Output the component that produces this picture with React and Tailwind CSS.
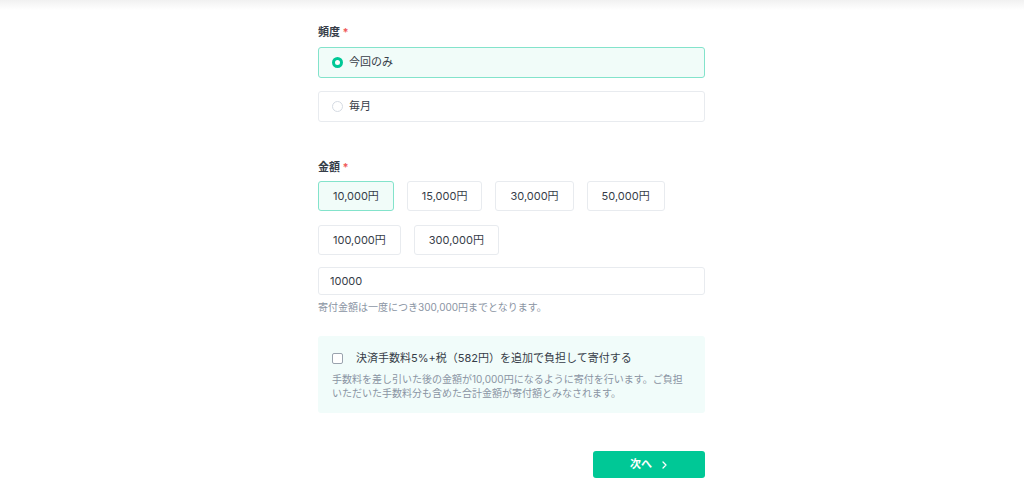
import React, { useState } from 'react';

const AMOUNTS = [10000, 15000, 30000, 50000, 100000, 300000];

export default function App() {
  const [freq, setFreq] = useState('once');
  const [amount, setAmount] = useState(10000);
  const [coverFee, setCoverFee] = useState(false);

  return (
    <div
      className="min-h-screen bg-white text-[#363d48]"
      style={{ fontFamily: 'Inter, "Noto Sans CJK JP", sans-serif' }}
    >
      {/* header shadow */}
      <div className="h-[10px] bg-gradient-to-b from-[#f1f1f1] to-white"></div>

      <div className="w-[387px] ml-[318px] pt-[13px]">
        {/* Frequency */}
        <div className="text-[11px] font-bold leading-[18px] text-[#363d48]">
          頻度 <span className="text-[#f05a5a]">*</span>
        </div>
        <div className="mt-[6px] flex flex-col gap-[13px]">
          {[
            { key: 'once', label: '今回のみ' },
            { key: 'monthly', label: '毎月' },
          ].map((opt) => {
            const active = freq === opt.key;
            return (
              <button
                key={opt.key}
                onClick={() => setFreq(opt.key)}
                className={`h-[31px] flex items-center px-[13px] rounded-[3px] border text-left ${
                  active ? 'border-[#83e3cb] bg-[#f1fcf9]' : 'border-[#e8ebef] bg-white'
                }`}
              >
                {active ? (
                  <span className="w-[11px] h-[11px] rounded-full border-[3px] border-[#00c896] bg-white"></span>
                ) : (
                  <span className="w-[11px] h-[11px] rounded-full border border-[#d5dbe3] bg-white"></span>
                )}
                <span className="ml-[6px] text-[11px] text-[#363d48]">{opt.label}</span>
              </button>
            );
          })}
        </div>

        {/* Amount */}
        <div className="mt-[36px] text-[11px] font-bold leading-[18px] text-[#363d48]">
          金額 <span className="text-[#f05a5a]">*</span>
        </div>
        <div className="mt-[5px] flex flex-wrap gap-x-[13px] gap-y-[14px] w-full">
          {AMOUNTS.map((a) => {
            const active = amount === a;
            return (
              <button
                key={a}
                onClick={() => setAmount(a)}
                className={`h-[30px] px-[14px] rounded-[3px] border text-[11px] text-[#363d48] ${
                  active ? 'border-[#83e3cb] bg-[#f1fcf9]' : 'border-[#e8ebef] bg-white'
                }`}
              >
                {a.toLocaleString('en-US')}円
              </button>
            );
          })}
        </div>
        <input
          value={amount}
          onChange={(e) => setAmount(Number(e.target.value) || 0)}
          className="mt-[12px] w-full h-[28px] px-[11px] rounded-[3px] border border-[#e8ebef] text-[11px] text-[#363d48] outline-none"
        />
        <p className="mt-[4px] text-[10px] leading-[16px] text-[#8a94a3]">
          寄付金額は一度につき300,000円までとなります。
        </p>

        {/* Fee box */}
        <div className="mt-[21px] h-[77px] rounded-[3px] bg-[#f1fcfa] px-[14px] pt-[14px]">
          <label className="flex items-center cursor-pointer">
            <input
              type="checkbox"
              checked={coverFee}
              onChange={(e) => setCoverFee(e.target.checked)}
              className="sr-only"
            />
            <span
              className={`w-[11px] h-[11px] rounded-[2px] border ${
                coverFee ? 'border-[#00c896] bg-[#00c896]' : 'border-[#9aa3ae] bg-white'
              }`}
            ></span>
            <span className="ml-[13px] text-[11px] leading-[16px] text-[#363d48]">
              決済手数料5%+税（582円）を追加で負担して寄付する
            </span>
          </label>
          <p className="mt-[6px] text-[10px] leading-[14px] text-[#8a94a3]">
            手数料を差し引いた後の金額が10,000円になるように寄付を行います。ご負担いただいた手数料分も含めた合計金額が寄付額とみなされます。
          </p>
        </div>

        {/* Next */}
        <div className="mt-[38px] flex justify-end">
          <button className="w-[112px] h-[27px] rounded-[3px] bg-[#00c896] text-white text-[11px] font-bold flex items-center justify-center">
            次へ
            <svg className="ml-[9px]" width="7" height="8" viewBox="0 0 7 8" fill="none">
              <path d="M2 1l3 3-3 3" stroke="white" strokeWidth="1.3" strokeLinecap="round" strokeLinejoin="round" />
            </svg>
          </button>
        </div>
      </div>
    </div>
  );
}
